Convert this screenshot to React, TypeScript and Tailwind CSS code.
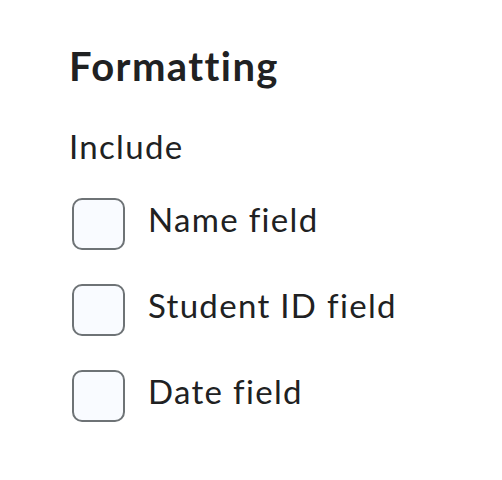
export default function App() {
  const fields = ['Name field', 'Student ID field', 'Date field']

  return (
    <div className="min-h-screen w-full bg-white font-['Lato','Noto_Sans',sans-serif] text-[#202122] [font-variant-ligatures:none] pl-[69px] pt-[42px]">
      <h2 className="text-[40px] leading-[48px] font-bold tracking-[0.035em]">Formatting</h2>
      <div className="mt-[37px] text-[33px] leading-[39px] tracking-[0.04em]">Include</div>
      <div className="mt-[32px] flex flex-col gap-[34px]">
        {fields.map((f) => (
          <label key={f} className="flex items-start gap-[23px]">
            <span className="ml-[3px] w-[53px] h-[52px] shrink-0 rounded-[10px] border-2 border-[#6e7376] bg-[#f9fbff]" />
            <span className="mt-[2px] text-[33px] leading-[39px] tracking-[0.04em]">{f}</span>
          </label>
        ))}
      </div>
    </div>
  )
}
